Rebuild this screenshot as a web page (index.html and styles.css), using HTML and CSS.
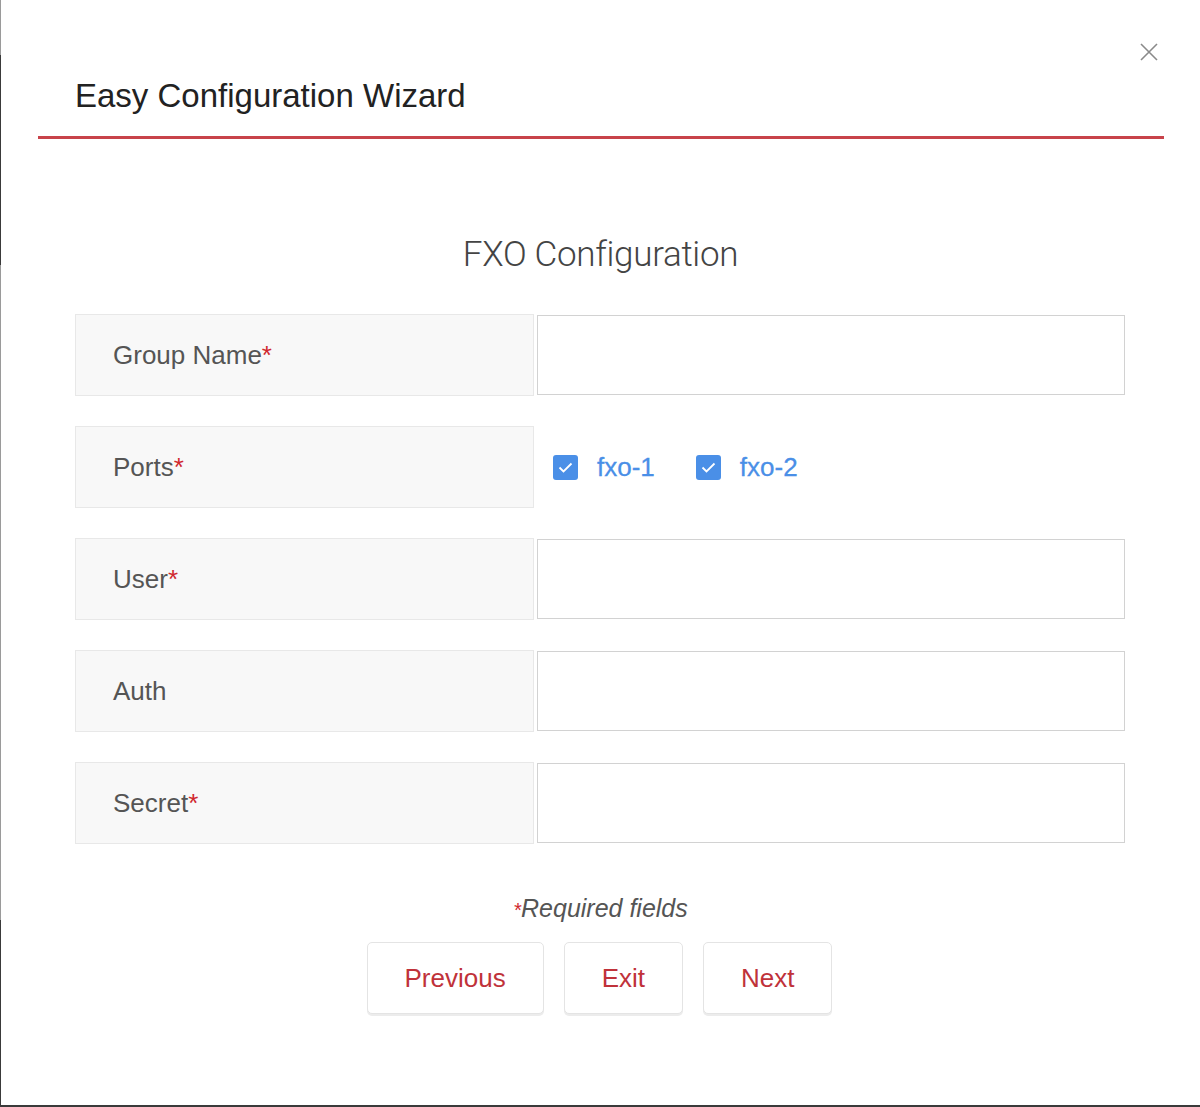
FILE: index.html
```html
<!DOCTYPE html>
<html lang="en">
<head>
  <meta charset="UTF-8">
  <title>Easy Configuration Wizard</title>
  <link rel="stylesheet" href="styles.css">
</head>
<body>
  <div class="modal">
    <div class="modal-header">
      <h1>Easy Configuration Wizard</h1>
      <button class="close" aria-label="Close">
        <svg width="18" height="18" viewBox="0 0 18 18"><path d="M1 1L17 17M17 1L1 17" stroke="#8a8a8a" stroke-width="1.6" fill="none"/></svg>
      </button>
    </div>

    <h2 class="step-title">FXO Configuration</h2>

    <div class="form">
      <div class="form-row">
        <div class="label">Group Name<span class="req">*</span></div>
        <input type="text" class="field">
      </div>
      <div class="form-row">
        <div class="label">Ports<span class="req">*</span></div>
        <div class="ports">
          <label class="port"><span class="check"><svg width="25" height="25" viewBox="0 0 25 25"><path d="M6.5 12.5L10.5 16.5L18.5 8.5" stroke="#fff" stroke-width="1.8" fill="none"/></svg></span>fxo-1</label>
          <label class="port"><span class="check"><svg width="25" height="25" viewBox="0 0 25 25"><path d="M6.5 12.5L10.5 16.5L18.5 8.5" stroke="#fff" stroke-width="1.8" fill="none"/></svg></span>fxo-2</label>
        </div>
      </div>
      <div class="form-row">
        <div class="label">User<span class="req">*</span></div>
        <input type="text" class="field">
      </div>
      <div class="form-row">
        <div class="label">Auth</div>
        <input type="text" class="field">
      </div>
      <div class="form-row">
        <div class="label">Secret<span class="req">*</span></div>
        <input type="password" class="field">
      </div>
    </div>

    <p class="required"><span class="req">*</span>Required fields</p>

    <div class="actions">
      <button class="btn">Previous</button>
      <button class="btn">Exit</button>
      <button class="btn">Next</button>
    </div>
  </div>
</body>
</html>
```

FILE: styles.css
```css
* {
  box-sizing: border-box;
  margin: 0;
  padding: 0;
}
body {
  font-family: "Liberation Sans", Arial, sans-serif;
  background: linear-gradient(to bottom, #9a9a9a 0, #9a9a9a 55px, #3a3a3a 55px, #3a3a3a 265px, #9a9a9a 265px, #9a9a9a 920px, #3a3a3a 920px);
  padding-left: 1px;
  padding-bottom: 2px;
  height: 1107px;
  overflow: hidden;
}
.modal {
  background-color: #fff;
  height: 1105px;
  position: relative;
}
.modal-header {
  margin: 0 36px 0 37px;
  padding: 76px 37px 20px;
  border-bottom: 3px solid #c8434a;
}
.modal-header h1 {
  font-size: 33px;
  line-height: 40px;
  font-weight: normal;
  color: #222;
}
.close {
  position: absolute;
  top: 43px;
  right: 42px;
  width: 18px;
  height: 18px;
  background: none;
  border: none;
  cursor: pointer;
}
.close svg {
  display: block;
}
.step-title {
  margin-top: 94px;
  text-align: center;
  font-family: Roboto, "Liberation Sans", sans-serif;
  font-weight: 300;
  font-size: 35px;
  line-height: 44px;
  letter-spacing: -0.3px;
  color: #444;
}
.form {
  margin: 37px 0 0 74px;
  width: 1050px;
  display: flex;
  flex-direction: column;
  gap: 30px;
}
.form-row {
  display: grid;
  grid-template-columns: 459px 588px;
  gap: 3px;
  align-items: center;
  height: 82px;
}
.label {
  height: 82px;
  display: flex;
  align-items: center;
  padding-left: 37px;
  background-color: #f8f8f8;
  border: 1px solid #e8e8e8;
  font-size: 26px;
  color: #555;
}
.req {
  color: #d0282e;
}
.field {
  height: 80px;
  border: 1px solid #d2d2d2;
  background: #fff;
  font-size: 24px;
  padding: 0 16px;
  outline: none;
}
.ports {
  display: flex;
  align-items: center;
  gap: 41px;
  padding-left: 16px;
}
.port {
  display: flex;
  align-items: center;
  gap: 19px;
  font-size: 26px;
  color: #4a8fe7;
  -webkit-text-stroke: 0.3px #4a8fe7;
}
.check {
  width: 25px;
  height: 25px;
  border-radius: 3px;
  background-color: #4a8fe7;
}
.check svg {
  display: block;
}
.required {
  margin-top: 50px;
  text-align: center;
  font-style: italic;
  font-size: 25px;
  line-height: 28px;
  color: #555;
}
.required .req {
  font-size: 20px;
}
.actions {
  margin-top: 18px;
  display: flex;
  justify-content: center;
  gap: 20px;
  padding-right: 2px;
}
.btn {
  height: 72px;
  padding: 0 37px;
  font-family: "Liberation Sans", Arial, sans-serif;
  font-size: 26px;
  color: #c0323a;
  background: #fff;
  border: 1px solid #e4e4e4;
  border-radius: 5px;
  box-shadow: 0 2px 0 #ececec;
  cursor: pointer;
}
```
